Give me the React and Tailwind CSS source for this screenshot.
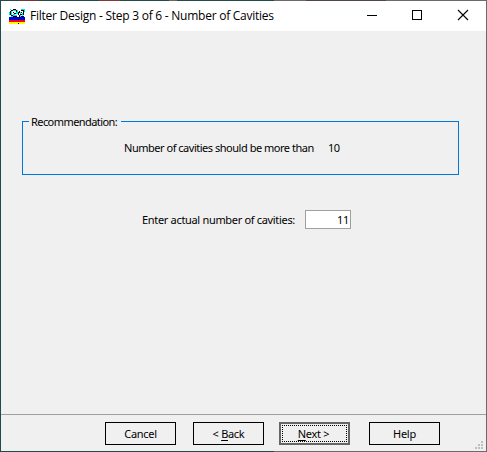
import React from "react";

function AppIcon() {
  return (
    <svg width="16" height="15" viewBox="0 0 16 15" shapeRendering="crispEdges" className="shrink-0">
      <path fill="#00e5e5" d="M1 0h1v1H1zM4 1h3v1H4zM0 3h1v3H0zM2 2h1v4H2zM4 5h2v1H4zM4 6h4v1H4zM7 3h1v2H7zM8 1h1v4H8zM12 0h4v1h-4zM11 3h1v2h-1zM13 4h1v3h-1zM15 1h1v2h-1zM11 6h1v2h-1zM2 7h2v1H2z" />
      <path fill="#000" d="M4 0h3v1H4zM2 1h2v1H2zM7 1h1v2H7zM1 2h1v4H1zM2 6h2v1H2zM4 7h4v1H4zM4 3h1v1H4zM5 4h2v1H5zM9 3h1v3H9zM12 1h3v1h-3zM10 2h1v2h-1zM12 3h1v1h-1zM14 2h1v4h-1zM11 5h2v1h-2zM10 6h1v2h-1zM12 7h3v1h-3z" />
      <path fill="#0000e8" d="M0 8h16v3H0z" />
      <path fill="#f00" d="M0 11h16v2H0z" />
      <path fill="#ff0" d="M0 13h16v2H0z" />
      <path fill="#000" d="M4 8h1v1H4zM10 8h1v1h-1zM9 10h1v1H9zM9 14h1v1H9z" />
    </svg>
  );
}

function WindowControls() {
  return (
    <svg width="107" height="16" viewBox="366 8 107 16" fill="none" stroke="#000" className="ml-auto mr-[13px] shrink-0">
      <path d="M367 15.5h10M412.5 10.5h9v9h-9z" shapeRendering="crispEdges" />
      <path d="M458 10l10 10M468 10l-10 10" strokeWidth="1.1" />
    </svg>
  );
}

function Button({ children, focused = false, className = "" }) {
  return (
    <button
      className={`h-[23px] w-[71px] shrink-0 tracking-[-0.3px] ${focused ? "border-2 border-[#666] p-px" : "border border-black"} ${className}`}
    >
      <span className={`flex h-full w-full items-center justify-center whitespace-pre leading-none ${focused ? "border border-dotted border-black pr-[2px] pb-px" : "pb-px"}`}>
        {children}
      </span>
    </button>
  );
}

function TopEdge() {
  return (
    <div className="flex h-px shrink-0 bg-[#24494b]">
      <i className="ml-[19px] w-5 bg-[#70383c]" />
      <i className="ml-[60px] w-[21px] bg-[#86383f]" />
      <i className="ml-[49px] w-2 bg-[#71675a]" />
      <i className="ml-[97px] w-8 bg-[#6b6b6b]" />
      <i className="w-20 bg-[#51464f]" />
      <i className="flex-1 bg-[#6b6b6b]" />
    </div>
  );
}

export default function App() {
  return (
    <div className="flex h-[452px] w-[487px] flex-col overflow-hidden font-['Noto_Sans',sans-serif] text-[11px] text-black">
      <TopEdge />
      <div className="flex min-h-0 flex-1 flex-col border-x border-r-[#6b6b6b] border-l-[#24494b] bg-[#f0f0f0]">
        <header className="flex h-[30px] shrink-0 items-center bg-white pl-2">
          <AppIcon />
          <h1 className="ml-[5px] whitespace-nowrap font-['Open_Sans',sans-serif] text-[12px] leading-4 tracking-[-0.25px]">
            Filter Design - Step 3 of 6 - Number of Cavities
          </h1>
          <WindowControls />
        </header>

        <main className="flex h-[383px] shrink-0 flex-col">
          <fieldset className="ml-[21px] mt-[83px] h-[61px] w-[437px] border border-[#0078d7] pl-[6px]">
            <legend className="h-[15px] w-[92px] whitespace-nowrap pl-[2px] leading-[15px] tracking-[-0.57px]">Recommendation:</legend>
            <div className="flex pl-[95px] pt-[11px] leading-[15px]">
              <span className="w-[204px] whitespace-nowrap tracking-[-0.48px]">Number of cavities should be more than</span>
              <span className="tracking-[-0.6px]">10</span>
            </div>
          </fieldset>
          <label className="ml-[141px] mt-[35px] flex h-[19px] items-center">
            <span className="w-[163px] whitespace-nowrap pb-px leading-[15px] tracking-[-0.32px]">Enter actual number of cavities:</span>
            <input
              defaultValue="11"
              className="h-[19px] w-[46px] border border-[#a0a0a0] bg-white pr-px pb-px text-right leading-[15px] tracking-[-0.3px] outline-none"
            />
          </label>
        </main>

        <footer className="flex min-h-0 flex-1 items-start border-t border-[#a0a0a0] pl-[104px] pt-[7px]">
          <Button>Cancel</Button>
          <Button className="ml-[17px]">{"< "}<u className="underline-offset-2">B</u>ack</Button>
          <Button className="ml-[15px]" focused><u className="underline-offset-2">N</u>{"ext >"}</Button>
          <Button className="ml-[19px]">Help</Button>
          <svg width="8" height="8" viewBox="0 0 8 8" fill="#bfbfbf" shapeRendering="crispEdges" className="ml-auto mr-[3px] mt-[19px] shrink-0">
            <path d="M6 0h2v2H6zM3 3h2v2H3zM6 3h2v2H6zM0 6h2v2H0zM3 6h2v2H3zM6 6h2v2H6z" />
          </svg>
        </footer>
      </div>
      <div className="flex h-px shrink-0 bg-[#6b6b6b]">
        <i className="w-[274px] bg-[#24494b]" />
      </div>
    </div>
  );
}
